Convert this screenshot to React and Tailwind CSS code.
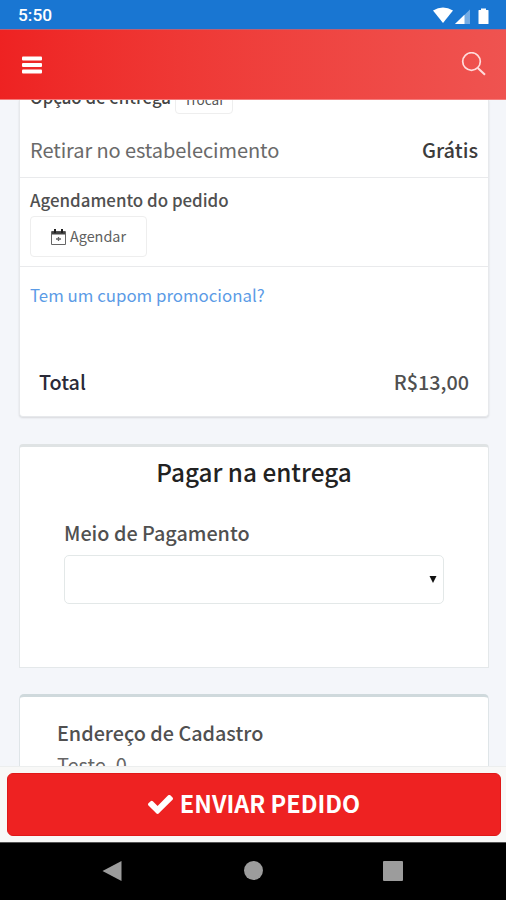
function StatusBar() {
  return (
    <div className="flex h-[29px] shrink-0 items-center justify-between bg-[#1976d2] pt-[3px] pr-[16px] pl-[18px]">
      <span className="font-[Roboto] text-[17.3px] leading-none font-medium text-white">5:50</span>
      <svg width="60" height="20" viewBox="0 0 60 20" fill="#fff">
        <path d="M3 4.4Q13 -1.4 23 4.4L13 17Z" />
        <path d="M25 18L40 3.5V18Z" opacity="0.4" />
        <path d="M25 18L34.500 8.800V18Z" />
        <path d="M48.500 4.500Q48.500 4 49 4H51V2.500H56V4H58Q58.500 4 58.500 4.500V17.500Q58.500 18 58 18H49Q48.500 18 48.500 17.500Z" />
      </svg>
    </div>
  );
}

function Header() {
  return (
    <header className="flex h-[71px] shrink-0 items-center justify-between border-t border-b border-t-[#b86078] border-b-[#f47c7c] bg-linear-to-r from-[#ee2222] to-[#ef5350] pr-[20px] pl-[22px]">
      <svg width="20" height="18" viewBox="0 0 20 18" fill="#fff">
        <rect x="0" y="0.500" width="20" height="4" rx="1" />
        <rect x="0" y="7" width="20" height="4" rx="1" />
        <rect x="0" y="13.500" width="20" height="4" rx="1" />
      </svg>
      <svg width="25" height="25" viewBox="0 0 25 25" fill="none" stroke="#ffdcdc" strokeWidth="1.700">
        <circle cx="10.500" cy="9.500" r="8.800" />
        <path d="M16.800 16L24 22.800" strokeWidth="2" />
      </svg>
    </header>
  );
}

function OrderCard() {
  return (
    <section className="flow-root h-[317px] rounded-b-[4px] border border-t-0 border-[#e7e9ec] bg-white shadow-[0_1px_2px_rgba(0,0,0,0.12)]">
      <div className="-mt-[18px] flex h-[32px] items-start px-[10px]">
        <span className="text-[16.8px] leading-[31px] font-medium text-[#444]">Opção de entrega</span>
        <span className="ml-[4px] h-[32px] rounded-[4px] border border-[#eee] px-[8px] text-[13.6px] leading-[32px] text-[#555]">Trocar</span>
      </div>
      <div className="flex h-[64px] items-center justify-between border-b border-[#e9eaec] px-[10px] pt-[8px]">
        <span className="text-[20px] tracking-[-0.08px] text-[#6a6a6a]">Retirar no estabelecimento</span>
        <span className="text-[20px] font-medium text-[#3c3c3c]">Grátis</span>
      </div>
      <div className="h-[89px] border-b border-[#e9eaec] px-[10px] pt-[10px]">
        <p className="text-[16.9px] leading-[24px] font-medium text-[#505050]">Agendamento do pedido</p>
        <button className="mt-[4px] flex h-[41px] w-[117px] items-center justify-center gap-[4px] rounded-[4px] border border-[#eee] text-[14.4px] text-[#606060]">
          <svg width="15" height="16" viewBox="0 0 15 16" fill="none" stroke="#666">
            <path d="M0.500 2.500H14.500V15.500H0.500Z" />
            <path d="M1 4H14" stroke="#444" strokeWidth="3" />
            <path d="M4 0V4M11 0V4" stroke="#222" strokeWidth="2" />
            <path d="M5 10H10M7.500 8V12" strokeWidth="1.300" />
          </svg>
          <span className="pb-[2px]">Agendar</span>
        </button>
      </div>
      <a className="block px-[10px] pt-[16px] text-[16.85px] leading-[24px] text-[#5b9be6]">Tem um cupom promocional?</a>
      <div className="mt-[60px] flex items-center justify-between px-[19px] text-[19.8px] leading-[30px] font-medium">
        <span className="text-[#2a2a38]">Total</span>
        <span className="text-[#505050]">R$13,00</span>
      </div>
    </section>
  );
}

function PaymentCard() {
  return (
    <section className="mt-[27px] h-[224px] rounded-t-[4px] border border-t-[3px] border-[#e4e8ea] border-t-[#dfe3e4] bg-white px-[44px]">
      <h2 className="pt-[7px] text-center text-[24.3px] leading-[36px] font-medium text-[#222]">Pagar na entrega</h2>
      <p className="mt-[28px] text-[19.8px] leading-[30px] font-medium text-[#505050]">Meio de Pagamento</p>
      <div className="mt-[7px] flex h-[49px] items-center justify-end rounded-[5px] border border-[#e3e8e8] pr-[6px]">
        <svg width="8" height="7" viewBox="0 0 8 7" fill="#111">
          <path d="M0.500 0H7.500L4 7Z" />
        </svg>
      </div>
    </section>
  );
}

function AddressCard() {
  return (
    <section className="mt-[26px] h-[120px] rounded-t-[5px] border border-t-[3px] border-[#dfe5e8] border-t-[#cfd9dc] bg-white px-[37px] pt-[21px]">
      <p className="text-[19.8px] leading-[30px] font-medium text-[#505050]">Endereço de Cadastro</p>
      <p className="mt-[2px] text-[20px] leading-[30px] text-[#666]">Teste, 0</p>
    </section>
  );
}

function Footer() {
  return (
    <div className="h-[76px] shrink-0 border-t border-[#eceeee] bg-[#f8f8f7] pt-[6px] pr-[5px] pl-[7px]">
      <button className="flex h-[63px] w-full items-center justify-center gap-[7px] rounded-[6px] border border-[#e01818] bg-[#ee2222] text-[23.5px] leading-[36px] font-bold text-white">
        <svg width="25" height="19" viewBox="121 340 1550 1182" preserveAspectRatio="none" fill="#fff">
          <path d="M1671 566q0 40-28 68l-724 724-136 136q-28 28-68 28t-68-28l-136-136-362-362q-28-28-28-68t28-68l136-136q28-28 68-28t68 28l294 295 656-657q28-28 68-28t68 28l136 136q28 28 28 68z" />
        </svg>
        <span className="pb-[3px]">ENVIAR PEDIDO</span>
      </button>
    </div>
  );
}

function NavigationBar() {
  return (
    <div className="flex h-[58px] shrink-0 items-center justify-between border-t border-[#555] bg-black pr-[103px] pb-[2px] pl-[102px]">
      <svg width="20" height="22" viewBox="0 0 20 22" fill="#9c9c9c">
        <path d="M0.500 11L19.500 1V21Z" />
      </svg>
      <span className="ml-px size-[19px] rounded-full bg-[#9c9c9c]" />
      <span className="size-[20px] rounded-[1px] bg-[#9c9c9c]" />
    </div>
  );
}

export default function App() {
  return (
    <div className="flex h-[900px] w-[506px] flex-col overflow-hidden bg-[#f4f6fa] font-['Noto_Sans_CJK_SC',sans-serif]">
      <StatusBar />
      <Header />
      <main className="min-h-0 flex-1 overflow-hidden pr-[17px] pl-[19px]">
        <OrderCard />
        <PaymentCard />
        <AddressCard />
      </main>
      <Footer />
      <NavigationBar />
    </div>
  );
}
